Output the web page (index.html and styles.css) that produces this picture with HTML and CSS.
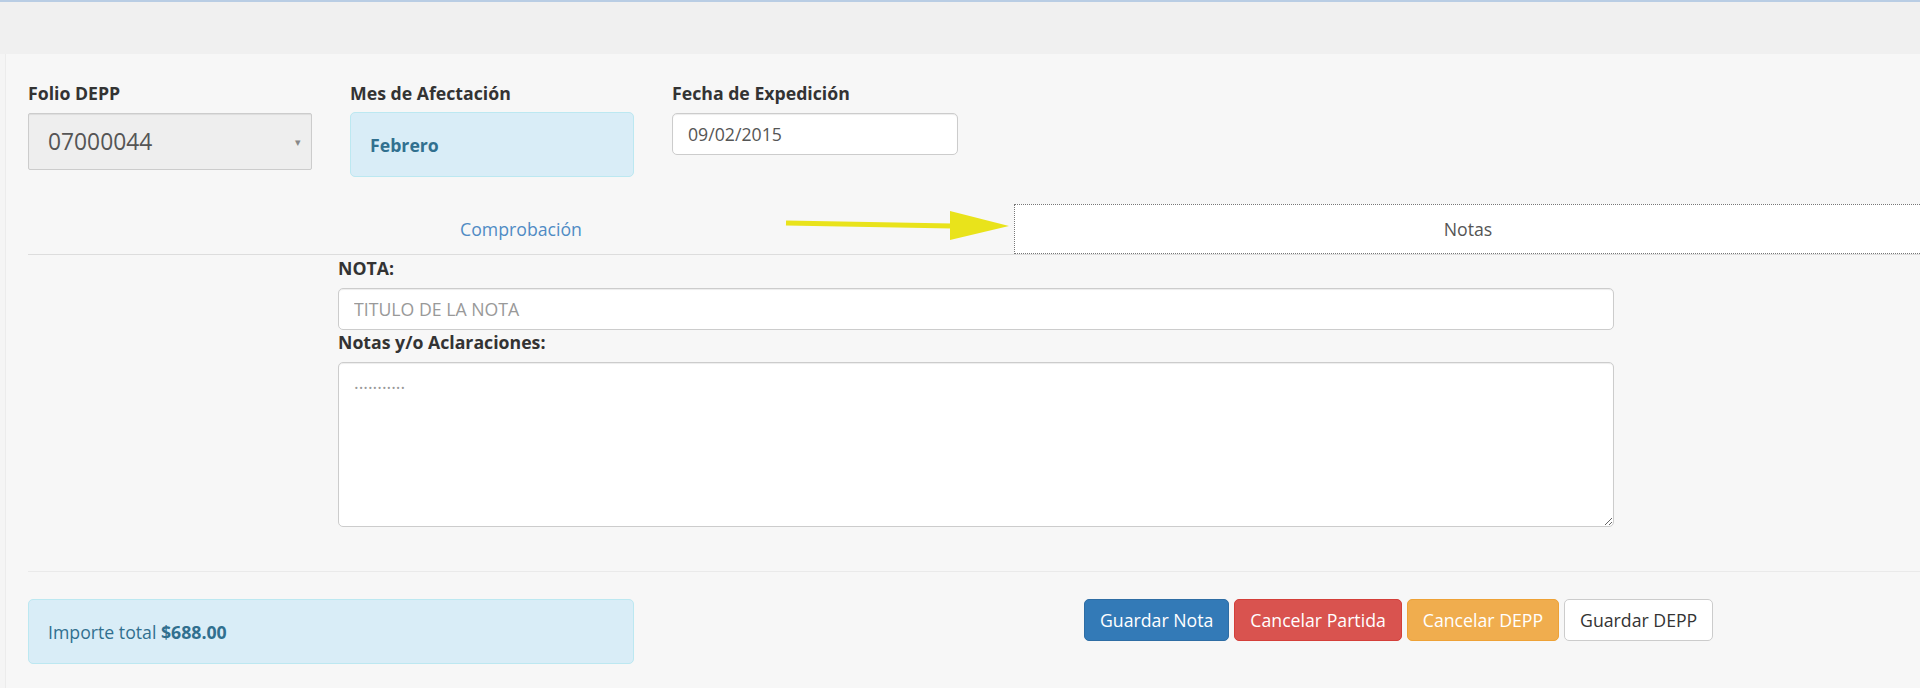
FILE: index.html
```html
<!DOCTYPE html>
<html lang="es">
<head>
    <meta charset="UTF-8">
    <title>DEPP - Notas</title>
    <link rel="stylesheet" href="styles.css">
</head>
<body>
    <div class="top-line"></div>
    <div class="band"></div>

    <main class="panel">
        <div class="fields">
            <div class="field">
                <label>Folio DEPP</label>
                <div class="select-box">
                    <span>07000044</span>
                    <span class="caret">&#9662;</span>
                </div>
            </div>
            <div class="field">
                <label>Mes de Afectación</label>
                <div class="alert-info month">Febrero</div>
            </div>
            <div class="field">
                <label>Fecha de Expedición</label>
                <input type="text" class="form-control" value="09/02/2015">
            </div>
        </div>

        <div class="tabs">
            <a class="tab">Comprobación</a>
            <a class="tab active">Notas</a>
            <!-- flecha de señalamiento -->
            <svg class="pointer" width="230" height="36" viewBox="0 0 230 36">
                <line x1="2" y1="15" x2="168" y2="18" stroke="#e9e31b" stroke-width="5"/>
                <polygon points="166,3 225,18 166,32" fill="#e9e31b"/>
            </svg>
        </div>

        <div class="note-form">
            <label>NOTA:</label>
            <input type="text" class="form-control" placeholder="TITULO DE LA NOTA">
            <label>Notas y/o Aclaraciones:</label>
            <textarea class="form-control notes" placeholder="..........."></textarea>
        </div>

        <hr class="divider">

        <div class="footer-row">
            <div class="alert-info total">Importe total&nbsp;<strong>$688.00</strong></div>
            <div class="actions">
                <button class="btn btn-primary">Guardar Nota</button>
                <button class="btn btn-danger">Cancelar Partida</button>
                <button class="btn btn-warning">Cancelar DEPP</button>
                <button class="btn btn-default">Guardar DEPP</button>
            </div>
        </div>
    </main>
</body>
</html>
```

FILE: styles.css
```css
/* DEPP - captura de notas */
* { box-sizing: border-box; }

body {
    margin: 0;
    background: #f5f5f5;
    font-family: "Open Sans", "Liberation Sans", sans-serif;
    font-size: 17.7px;
    line-height: 24px;
    color: #333;
    overflow: hidden;
    height: 688px;
}

.top-line { height: 2px; background: #b9cde4; }

.band { height: 52px; background: #f0f0f0; }

.panel {
    margin-left: 5px;
    border-left: 1px solid #ececec;
    background: #f7f7f7;
    padding: 27px 0 0 22px;
    height: 634px;
}

label {
    display: block;
    font-weight: 700;
    margin-bottom: 8px;
}

/* fila de campos */
.fields {
    display: grid;
    grid-template-columns: 284px 284px 286px;
    column-gap: 38px;
    align-items: start;
}

.select-box {
    height: 57px;
    background: #eee;
    border: 1px solid #ccc;
    border-radius: 2px;
    display: flex;
    align-items: center;
    justify-content: space-between;
    padding: 0 10px 0 19px;
    font-size: 22.8px;
    color: #555;
    box-shadow: inset 0 1px 1px rgba(0,0,0,.075);
}

.caret { font-size: 11px; color: #888; }

.alert-info {
    background: #d9edf7;
    border: 1px solid #bce8f1;
    border-radius: 5px;
    color: #31708f;
    display: flex;
    align-items: center;
    padding: 0 19px;
}

.month { height: 65px; font-weight: 700; margin-top: -1px; }

.form-control {
    display: block;
    width: 100%;
    height: 42px;
    padding: 7px 15px;
    font-family: inherit;
    font-size: 17.7px;
    line-height: 24px;
    color: #555;
    background: #fff;
    border: 1px solid #ccc;
    border-radius: 5px;
    box-shadow: inset 0 1px 1px rgba(0,0,0,.075);
    outline: none;
}

.form-control::placeholder { color: #999; }

/* pestañas */
.tabs {
    position: relative;
    margin-top: 27px;
    margin-right: -2px;
    display: grid;
    grid-template-columns: 986px 1fr;
    border-bottom: 1px solid #ddd;
    height: 51px;
}

.tab {
    height: 50px;
    display: flex;
    align-items: center;
    justify-content: center;
    color: #4f8bc4;
    text-decoration: none;
}

.tab.active {
    background: #fff;
    color: #555;
    border: 1px dotted #777;
}

.pointer {
    position: absolute;
    left: 756px;
    top: 4px;
}

/* formulario de nota */
.note-form {
    margin-top: 1px;
    padding-left: 310px;
    width: 1586px;
}

.notes {
    height: 165px;
    resize: vertical;
}

.divider {
    border: 0;
    border-top: 1px solid #eaeaea;
    margin: 44px 0 27px;
}

.footer-row {
    display: flex;
    align-items: flex-start;
}

.total { width: 606px; height: 65px; }

.actions {
    margin-left: 450px;
    display: flex;
    gap: 5px;
}

.btn {
    height: 42px;
    padding: 0 15px;
    font-family: inherit;
    font-size: 17.7px;
    border: 1px solid transparent;
    border-radius: 5px;
    color: #fff;
    cursor: pointer;
}

.btn-primary { background: #337ab7; border-color: #2e6da4; }
.btn-danger { background: #d9534f; border-color: #d43f3a; }
.btn-warning { background: #f0ad4e; border-color: #eea236; }
.btn-default { background: #fff; border-color: #ccc; color: #333; }
```
